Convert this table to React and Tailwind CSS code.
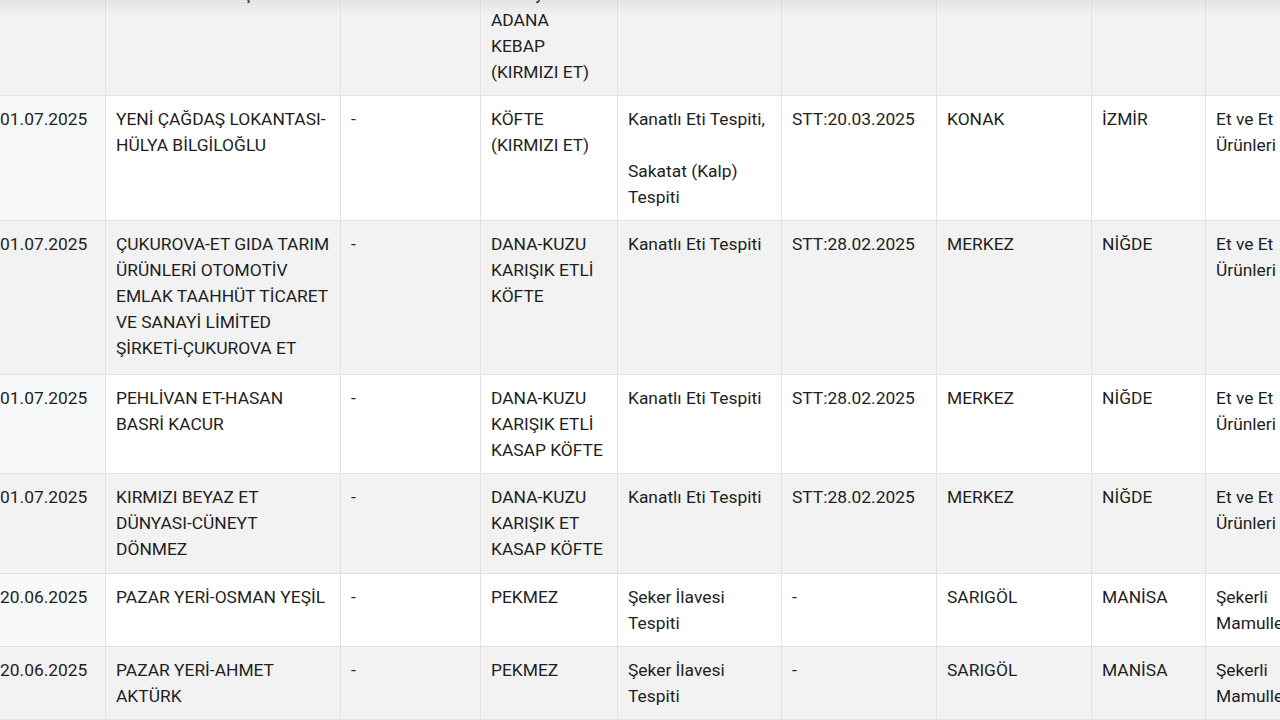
import React from 'react';

const rows = [
  {
    shade: true,
    pad: 'pb-[10px]',
    cells: [
      ['01.07.2025'],
      ['ÖZ URFA KEBAPÇI'],
      ['-'],
      ['Biberiyeli', 'ADANA', 'KEBAP', '(KIRMIZI ET)'],
      ['-'],
      ['-'],
      ['MERKEZ'],
      ['ADANA'],
      ['-'],
    ],
  },
  {
    shade: false,
    pad: 'pb-[10px]',
    cells: [
      ['01.07.2025'],
      ['YENİ ÇAĞDAŞ LOKANTASI-', 'HÜLYA BİLGİLOĞLU'],
      ['-'],
      ['KÖFTE', '(KIRMIZI ET)'],
      ['Kanatlı Eti Tespiti,', '', 'Sakatat (Kalp)', 'Tespiti'],
      ['STT:20.03.2025'],
      ['KONAK'],
      ['İZMİR'],
      ['Et ve Et', 'Ürünleri'],
    ],
  },
  {
    shade: true,
    pad: 'pb-[13px]',
    cells: [
      ['01.07.2025'],
      [
        'ÇUKUROVA-ET GIDA TARIM',
        'ÜRÜNLERİ OTOMOTİV',
        'EMLAK TAAHHÜT TİCARET',
        'VE SANAYİ LİMİTED',
        'ŞİRKETİ-ÇUKUROVA ET',
      ],
      ['-'],
      ['DANA-KUZU', 'KARIŞIK ETLİ', 'KÖFTE'],
      ['Kanatlı Eti Tespiti'],
      ['STT:28.02.2025'],
      ['MERKEZ'],
      ['NİĞDE'],
      ['Et ve Et', 'Ürünleri'],
    ],
  },
  {
    shade: false,
    pad: 'pb-[10px]',
    cells: [
      ['01.07.2025'],
      ['PEHLİVAN ET-HASAN', 'BASRİ KACUR'],
      ['-'],
      ['DANA-KUZU', 'KARIŞIK ETLİ', 'KASAP KÖFTE'],
      ['Kanatlı Eti Tespiti'],
      ['STT:28.02.2025'],
      ['MERKEZ'],
      ['NİĞDE'],
      ['Et ve Et', 'Ürünleri'],
    ],
  },
  {
    shade: true,
    pad: 'pb-[11px]',
    cells: [
      ['01.07.2025'],
      ['KIRMIZI BEYAZ ET', 'DÜNYASI-CÜNEYT', 'DÖNMEZ'],
      ['-'],
      ['DANA-KUZU', 'KARIŞIK ET', 'KASAP KÖFTE'],
      ['Kanatlı Eti Tespiti'],
      ['STT:28.02.2025'],
      ['MERKEZ'],
      ['NİĞDE'],
      ['Et ve Et', 'Ürünleri'],
    ],
  },
  {
    shade: false,
    pad: 'pb-[10px]',
    cells: [
      ['20.06.2025'],
      ['PAZAR YERİ-OSMAN YEŞİL'],
      ['-'],
      ['PEKMEZ'],
      ['Şeker İlavesi', 'Tespiti'],
      ['-'],
      ['SARIGÖL'],
      ['MANİSA'],
      ['Şekerli', 'Mamulleri'],
    ],
  },
  {
    shade: true,
    pad: 'pb-[10px]',
    cells: [
      ['20.06.2025'],
      ['PAZAR YERİ-AHMET', 'AKTÜRK'],
      ['-'],
      ['PEKMEZ'],
      ['Şeker İlavesi', 'Tespiti'],
      ['-'],
      ['SARIGÖL'],
      ['MANİSA'],
      ['Şekerli', 'Mamulleri'],
    ],
  },
];

const widths = ['w-[116px]', 'w-[235px]', 'w-[140px]', 'w-[137px]', 'w-[164px]', 'w-[155px]', 'w-[155px]', 'w-[114px]', 'w-[130px]'];

const Cell = ({ lines, first, shade, pad }) => {
  let bg = shade ? 'bg-[#f2f2f2]' : 'bg-white';
  if (first && !shade) bg = 'bg-[#f7f8fa]';
  return (
    <td className={`${bg} ${pad} align-top px-[10px] pt-[10px] border-r border-b border-[#e3e3e3] whitespace-nowrap`}>
      {lines.map((l, i) => (
        <div key={i} className="h-[26px]">
          {l}
        </div>
      ))}
    </td>
  );
};

const App = () => {
  return (
    <div
      className="relative w-[1280px] h-[720px] overflow-hidden bg-white text-[17.4px] leading-[26px] text-[#1e1e1e]"
      style={{ fontFamily: 'Roboto, "Noto Sans", sans-serif' }}
    >
      <table className="table-fixed border-separate border-spacing-0 -ml-[10px] -mt-[29px] w-[1346px]">
        <colgroup>
          {widths.map((w, i) => (
            <col key={i} className={w} />
          ))}
        </colgroup>
        <tbody>
          {rows.map((row, r) => (
            <tr key={r}>
              {row.cells.map((lines, c) => (
                <Cell key={c} lines={lines} first={c === 0} shade={row.shade} pad={row.pad} />
              ))}
            </tr>
          ))}
        </tbody>
      </table>
      <div className="absolute inset-x-0 top-0 h-[16px] bg-linear-to-b from-black/[0.06] to-transparent" />
    </div>
  );
};

export default App;
